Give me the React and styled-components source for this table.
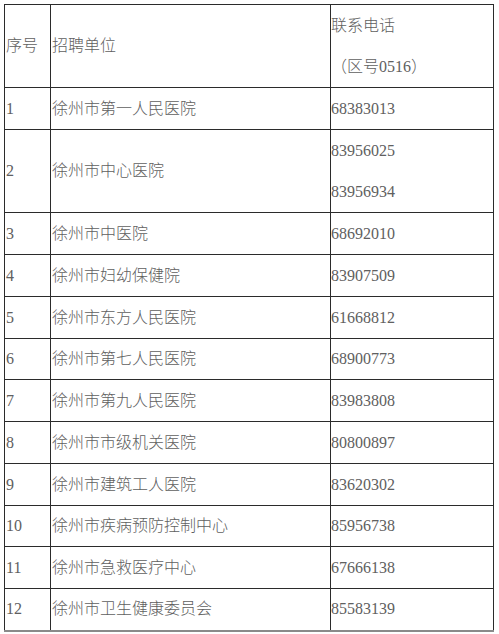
import React from "react";
import styled, { createGlobalStyle } from "styled-components";

const Global = createGlobalStyle`
  html, body { margin: 0; padding: 0; background: #fff; }
  body { font-family: "Liberation Serif", "Noto Sans CJK SC", serif; }
`;

const Page = styled.div`
  padding: 4px 0 0 4px;
`;

const Table = styled.table`
  border-collapse: collapse;
  table-layout: fixed;
  width: 489px;
  font-size: 16px;
  font-weight: 300;
  color: #606060;
  border-bottom: 2px solid #8a8a8a;
`;

const Row = styled.tr`
  height: ${(p) => p.$h}px;
`;

const Cell = styled.td`
  border: 1px solid #2b2b2b;
  padding: 0 0 0 ${(p) => p.$pad ?? 1}px;
  vertical-align: middle;
  white-space: nowrap;
  line-height: 20px;
`;

const Line = styled.div`
  line-height: 41px;
`;

const rows = [
  ["1", "徐州市第一人民医院", ["68383013"], 42],
  ["2", "徐州市中心医院", ["83956025", "83956934"], 82],
  ["3", "徐州市中医院", ["68692010"], 42],
  ["4", "徐州市妇幼保健院", ["83907509"], 42],
  ["5", "徐州市东方人民医院", ["61668812"], 42],
  ["6", "徐州市第七人民医院", ["68900773"], 41],
  ["7", "徐州市第九人民医院", ["83983808"], 42],
  ["8", "徐州市市级机关医院", ["80800897"], 42],
  ["9", "徐州市建筑工人医院", ["83620302"], 42],
  ["10", "徐州市疾病预防控制中心", ["85956738"], 41],
  ["11", "徐州市急救医疗中心", ["67666138"], 42],
  ["12", "徐州市卫生健康委员会", ["85583139"], 42],
];

export default function App() {
  return (
    <Page>
      <Global />
      <Table>
        <colgroup>
          <col style={{ width: 46 }} />
          <col style={{ width: 280 }} />
          <col style={{ width: 163 }} />
        </colgroup>
        <tbody>
          <Row $h={83}>
            <Cell>序号</Cell>
            <Cell>招聘单位</Cell>
            <Cell $pad={0}>
              <Line>联系电话</Line>
              <Line>（区号0516）</Line>
            </Cell>
          </Row>
          {rows.map(([n, name, phones, h]) => (
            <Row key={n} $h={h}>
              <Cell>{n}</Cell>
              <Cell>{name}</Cell>
              <Cell $pad={0}>
                {phones.length > 1
                  ? phones.map((p) => <Line key={p}>{p}</Line>)
                  : phones[0]}
              </Cell>
            </Row>
          ))}
        </tbody>
      </Table>
    </Page>
  );
}
